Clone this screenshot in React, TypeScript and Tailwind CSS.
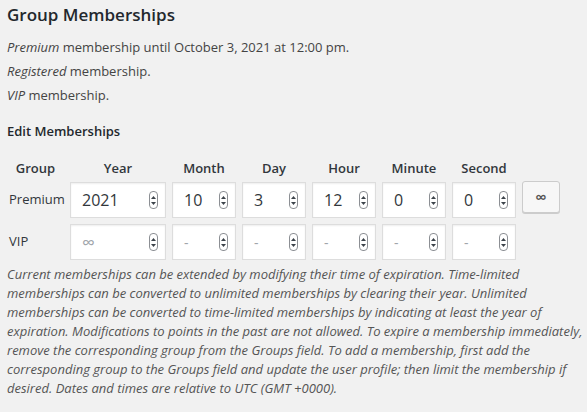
import React from "react";

const Spinner = () => (
  <span className="flex h-[18px] w-[9px] flex-col items-center justify-center gap-[3px] rounded-[4px] border border-[#8c8f94] bg-white">
    <svg width="5" height="3" viewBox="0 0 5 3">
      <path d="M2.5 0 L5 3 L0 3 Z" fill="#3c434a" />
    </svg>
    <svg width="5" height="3" viewBox="0 0 5 3">
      <path d="M0 0 L5 0 L2.5 3 Z" fill="#3c434a" />
    </svg>
  </span>
);

const Field = ({ value, placeholder }: { value?: string; placeholder?: string }) => (
  <div className="flex h-[36px] items-center justify-between border border-[#ddd] bg-white pl-[11px] pr-[7px] shadow-[inset_0_1px_2px_rgba(0,0,0,0.07)]">
    {value ? (
      <span className="text-[16px] text-[#32373c]">{value}</span>
    ) : placeholder === "∞" ? (
      <span className="text-[18px] text-[#a0a5aa]">{placeholder}</span>
    ) : (
      <span className="text-[14px] text-[#a0a5aa]">{placeholder}</span>
    )}
    <Spinner />
  </div>
);

const headers = ["Year", "Month", "Day", "Hour", "Minute", "Second"];

export default function App() {
  return (
    <div className="min-h-screen w-[587px] bg-[#f1f1f1] pl-[7px] font-['Open_Sans',sans-serif] text-[13px] text-[#444]">
      <h2 className="pt-[3px] text-[17px] font-semibold leading-[24px] text-[#23282d]">Group Memberships</h2>

      <div className="mt-[8px] leading-[24px]">
        <div>
          <i>Premium</i> membership until October 3, 2021 at 12:00 pm.
        </div>
        <div>
          <i>Registered</i> membership.
        </div>
        <div>
          <i>VIP</i> membership.
        </div>
      </div>

      <h3 className="mt-[12px] font-semibold leading-[24px] text-[#23282d]">Edit Memberships</h3>

      <div className="mt-[13px] grid grid-cols-[57px_96px_64px_64px_64px_64px_64px_40px] gap-x-[6px]">
        <div className="h-[24px] text-center font-semibold leading-[24px] text-[#32373c]">Group</div>
        {headers.map((h) => (
          <div key={h} className="h-[24px] text-center font-semibold leading-[24px] text-[#32373c]">
            {h}
          </div>
        ))}
        <div />

        <div className="mt-[2px] flex items-center pl-[2px] text-[#32373c]">Premium</div>
        <div className="mt-[2px]"><Field value="2021" /></div>
        <div className="mt-[2px]"><Field value="10" /></div>
        <div className="mt-[2px]"><Field value="3" /></div>
        <div className="mt-[2px]"><Field value="12" /></div>
        <div className="mt-[2px]"><Field value="0" /></div>
        <div className="mt-[2px]"><Field value="0" /></div>
        <div className="mt-[1px]">
          <button className="flex h-[32px] w-[38px] items-center justify-center rounded-[3px] border border-[#ccc] bg-[#f7f7f7] text-[16px] font-semibold text-[#555] shadow-[0_1px_0_#ccc]">
            ∞
          </button>
        </div>

        <div className="mt-[6px] flex items-center pl-[2px] text-[#32373c]">VIP</div>
        <div className="mt-[6px]"><Field placeholder="∞" /></div>
        <div className="mt-[6px]"><Field placeholder="-" /></div>
        <div className="mt-[6px]"><Field placeholder="-" /></div>
        <div className="mt-[6px]"><Field placeholder="-" /></div>
        <div className="mt-[6px]"><Field placeholder="-" /></div>
        <div className="mt-[6px]"><Field placeholder="-" /></div>
        <div />
      </div>

      <p className="mt-[5px] italic leading-[19px] text-[#555]">
        Current memberships can be extended by modifying their time of expiration. Time-limited memberships can be
        converted to unlimited memberships by clearing their year. Unlimited memberships can be converted to
        time-limited memberships by indicating at least the year of expiration. Modifications to points in the past are
        not allowed. To expire a membership immediately, remove the corresponding group from the Groups field. To add a
        membership, first add the corresponding group to the Groups field and update the user profile; then limit the
        membership if desired. Dates and times are relative to UTC (GMT +0000).
      </p>
    </div>
  );
}
